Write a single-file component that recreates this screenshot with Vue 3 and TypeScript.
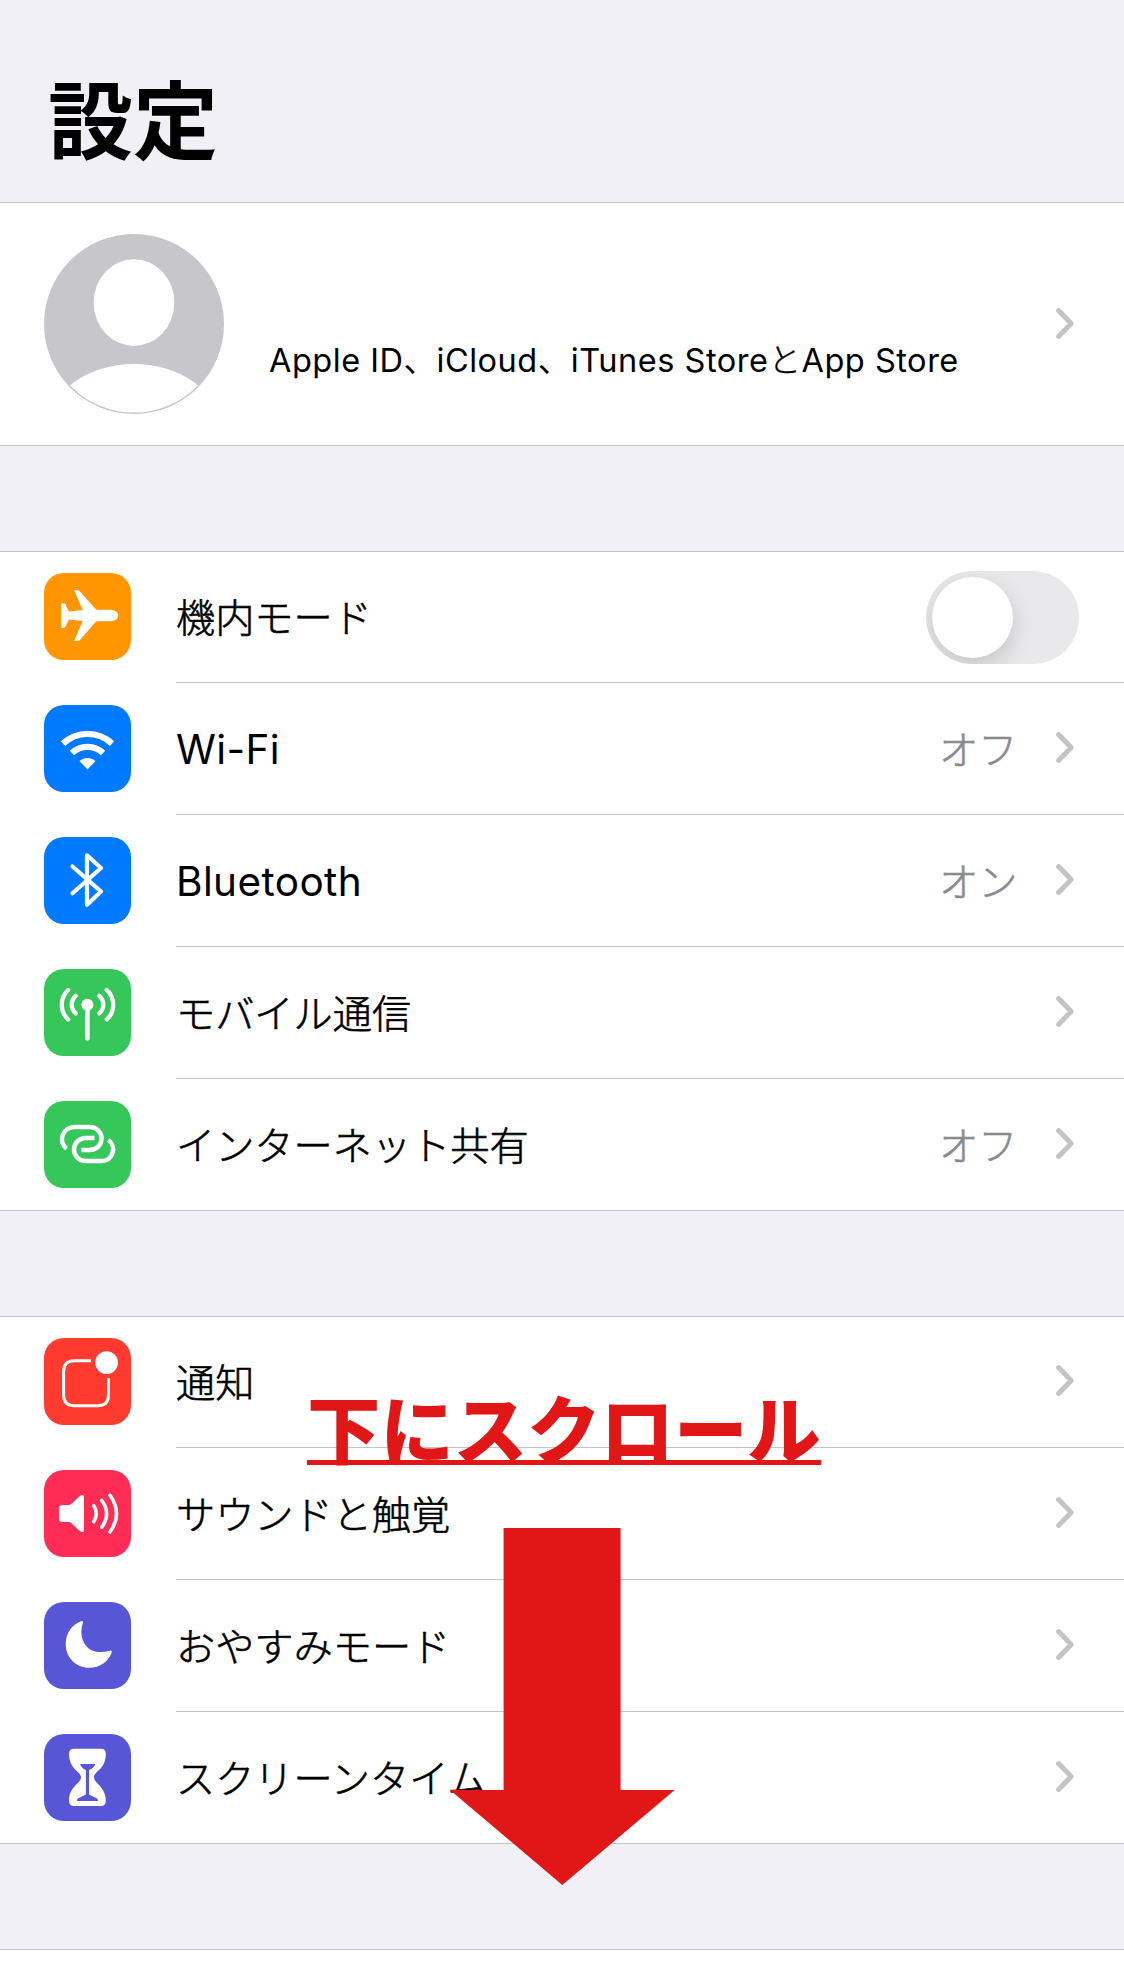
<script setup lang="ts">
type IconName = 'airplane' | 'wifi' | 'bluetooth' | 'cellular' | 'hotspot' | 'notify' | 'sound' | 'moon' | 'hourglass'

interface SettingRow {
  icon: IconName
  color: string
  label: string
  latin?: boolean
  value?: string
  toggle?: boolean
}

const groups: SettingRow[][] = [
  [
    { icon: 'airplane', color: '#ff9500', label: '機内モード', toggle: true },
    { icon: 'wifi', color: '#007aff', label: 'Wi-Fi', latin: true, value: 'オフ' },
    { icon: 'bluetooth', color: '#007aff', label: 'Bluetooth', latin: true, value: 'オン' },
    { icon: 'cellular', color: '#35c759', label: 'モバイル通信' },
    { icon: 'hotspot', color: '#35c759', label: 'インターネット共有', value: 'オフ' },
  ],
  [
    { icon: 'notify', color: '#ff3b30', label: '通知' },
    { icon: 'sound', color: '#ff2d55', label: 'サウンドと触覚' },
    { icon: 'moon', color: '#5856d6', label: 'おやすみモード' },
    { icon: 'hourglass', color: '#5856d6', label: 'スクリーンタイム' },
  ],
]
</script>

<template>
  <main class="screen">
    <header class="header"><h1>設定</h1></header>

    <section class="profile">
      <svg class="avatar" viewBox="0 0 180 180">
        <defs><clipPath id="disc"><circle cx="90" cy="90" r="88.6" /></clipPath></defs>
        <circle cx="90" cy="90" r="90" fill="#c7c6cb" />
        <ellipse cx="90" cy="68.6" rx="40.4" ry="43.3" fill="#fff" />
        <ellipse cx="90" cy="192" rx="85" ry="62" fill="#fff" clip-path="url(#disc)" />
      </svg>
      <p class="account">Apple ID、iCloud、iTunes Store<span class="kana">と</span>App Store</p>
      <svg class="chevron" viewBox="0 0 18 31"><path d="M2.6 2.6 15.2 15.5 2.6 28.4" /></svg>
    </section>

    <section v-for="(rows, g) in groups" :key="g" class="group">
      <div v-for="row in rows" :key="row.label" class="row">
        <svg class="icon" viewBox="0 0 87 87" :style="{ background: row.color }">
          <path
            v-if="row.icon === 'airplane'"
            class="solid"
            d="M30 17h3.2q1.6 0 2.6 1.2L51.2 35.6q1 1.2 2.6 1.2H67q7.3 1 7.3 5.7T67 48.3H53.8q-1.6 0-2.6 1.2L36.400 66.600Q35.300 68 33.500 68H30l8.700-20L25 46.400l-3.400 7.200Q21 55 19.500 55H17V30.300h2.500q1.500 0 2.100 1.200L25 38.400 38.700 37Z"
          />
          <g v-else-if="row.icon === 'wifi'">
            <path class="line" stroke-width="6.300" d="M19 38.600A35.600 35.600 0 0 1 68 38.600M27.900 48A22.700 22.700 0 0 1 59.100 48" />
            <path class="solid" d="M43.500 64.500 35.500 56.100A11.600 11.600 0 0 1 51.500 56.100Z" />
          </g>
          <path
            v-else-if="row.icon === 'bluetooth'"
            class="line round"
            stroke-width="4.200"
            d="M28.500 29.500 57 54.500 43 67.800V18.300L57 31 28.500 56.200"
          />
          <g v-else-if="row.icon === 'cellular'">
            <circle class="solid" cx="43.400" cy="35.700" r="6" />
            <path class="line round" stroke-width="4.600" d="M43.400 36V69.500" />
            <path
              class="line round"
              stroke-width="4.300"
              d="M31.700 26.800A11.700 11.700 0 0 0 31.700 44.400M24.200 21A20 20 0 0 0 24.200 50.400M55.300 26.800A11.700 11.700 0 0 1 55.300 44.400M62.800 21A20 20 0 0 1 62.800 50.400"
            />
          </g>
          <path
            v-else-if="row.icon === 'hotspot'"
            class="line"
            stroke-width="4.500"
            d="M22.700 47.800A12.200 12.200 0 0 1 30.500 26H46A11.500 11.500 0 0 1 46 49H37M50.500 37H41.500A11.500 11.500 0 0 0 41.500 60H57A11.600 11.600 0 0 0 64.300 39"
          />
          <g v-else-if="row.icon === 'notify'">
            <path class="line" stroke-width="3" d="M47 22.700H30.500Q19.600 22.700 19.600 33.500V57Q19.600 67.800 30.500 67.800H53.500Q64.500 67.800 64.500 57V40" />
            <circle class="solid" cx="62.600" cy="24.600" r="11.400" />
          </g>
          <g v-else-if="row.icon === 'sound'">
            <path class="solid" d="M18.500 35H24.500Q26 35 27.200 34L35.500 26.300Q37.200 25 38.500 25 40 25 40 26.500V60.500Q40 62 38.500 62 37 62 35.500 60.800L27.200 53Q26 52 24.500 52H18.500Q15 52 15 48.500V38.500Q15 35 18.500 35Z" />
            <path class="line round" stroke-width="3.600" d="M49.800 35.800Q54.800 43.500 49.800 51.600M57.800 30.500Q67.400 43.500 57.800 57.200M66 25.300Q79 43.500 66 62" />
          </g>
          <path
            v-else-if="row.icon === 'moon'"
            class="solid"
            d="M37 19.200Q39.700 18.500 39 21C37 26 37 33 38.500 37 41.500 47.500 52 52.500 64.500 49Q68.500 47.500 67.700 50.500C64.500 59.500 56 65.800 45.300 65.800 32 65.800 21.700 55.500 21.700 42 21.700 31 28 22.500 37 19.200Z"
          />
          <g v-else>
            <path class="solid" d="M30 14.700H57Q61.800 14.700 61.800 19.500C61.800 36 50 37 50 43.300S61.800 52 61.800 67Q61.800 72 57 72H30Q25 72 25 67C25 52 37 49.500 37 43.300S25 36 25 19.500Q25 14.700 30 14.700Z" />
            <path :fill="row.color" d="M36 30H51.300Q50 34 45 36V60.500L53 64.500Q54 65 54 67H33Q33 65 34 64.500L41.900 60.500V36Q37.500 34 36 30Z" />
          </g>
        </svg>
        <div class="body">
          <span class="label" :class="{ latin: row.latin }">{{ row.label }}</span>
          <span v-if="row.toggle" class="toggle"><span class="knob"></span></span>
          <template v-else>
            <span v-if="row.value" class="value">{{ row.value }}</span>
            <svg class="chevron" viewBox="0 0 18 31"><path d="M2.600 2.600 15.200 15.500 2.600 28.400" /></svg>
          </template>
        </div>
      </div>
    </section>

    <div class="next-group"></div>

    <p class="callout">下にスクロール</p>
    <svg class="arrow" viewBox="0 0 225 357"><path d="M53.600 0H170.600V262H224.700L112.300 357 0 262H53.600Z" /></svg>
  </main>
</template>

<style>
body {
  margin: 0;
  background: #f1f0f6;
}
</style>

<style scoped>
.screen {
  position: relative;
  width: 1124px;
  height: 1970px;
  overflow: hidden;
  background: #f1f0f6;
  color: #000;
  font-family: Inter, 'Noto Sans CJK JP', sans-serif;
}
.header {
  height: 202px;
  padding-left: 48px;
  box-sizing: border-box;
}
h1 {
  margin: 0;
  padding-top: 56px;
  font: 700 85px/120px 'Noto Sans CJK JP', sans-serif;
}
.profile {
  display: flex;
  align-items: center;
  height: 242px;
  padding: 0 50px 0 44px;
  border-top: 1px solid #c3c3c6;
  border-bottom: 1px solid #c3c3c6;
  background: #fff;
}
.avatar {
  flex: none;
  width: 180px;
  height: 180px;
}
.account {
  flex: 1;
  margin: 74px 0 0 45px;
  font-size: 32.5px;
  font-weight: 400;
  line-height: 40px;
  letter-spacing: 0.52px;
  white-space: nowrap;
}
.kana {
  font-weight: 300;
  -webkit-text-stroke: 0.4px currentColor;
}
.chevron {
  flex: none;
  width: 18px;
  height: 31px;
  margin-bottom: 2px;
  fill: none;
  stroke: #c4c4c6;
  stroke-width: 5;
  stroke-linecap: round;
  stroke-linejoin: round;
}
.group {
  margin-top: 105px;
  border-top: 1px solid #c3c3c6;
  border-bottom: 1px solid #c3c3c6;
  background: #fff;
}
.row {
  display: flex;
  align-items: center;
  height: 132px;
  padding-left: 44px;
}
.row:first-child {
  margin-top: -1px;
}
.row:last-child {
  height: 131px;
}
.icon {
  flex: none;
  width: 87px;
  height: 87px;
  margin-top: -1px;
  border-radius: 20px;
}
.row:last-child .icon {
  margin-top: 0;
}
.solid {
  fill: #fff;
}
.line {
  fill: none;
  stroke: #fff;
}
.round {
  stroke-linecap: round;
  stroke-linejoin: round;
}
.body {
  flex: 1;
  display: flex;
  align-items: center;
  height: 131px;
  margin-left: 45px;
  padding-right: 50px;
  border-bottom: 1px solid #c3c3c6;
}
.row:last-child .body {
  border-bottom: 0;
}
.label {
  flex: 1;
  margin-bottom: 3px;
  font: 300 39.2px/60px 'Noto Sans CJK JP', sans-serif;
  -webkit-text-stroke: 0.6px currentColor;
  white-space: nowrap;
}
.label.latin {
  margin: 3px 0 0;
  font: 400 40.5px/60px Inter, sans-serif;
  letter-spacing: 0.4px;
  -webkit-text-stroke: 0;
}
.value {
  margin: 0 38.600px 3px 0;
  color: #8a8a8e;
  font: 300 39.2px/60px 'Noto Sans CJK JP', sans-serif;
  -webkit-text-stroke: 0.6px currentColor;
}
.toggle {
  flex: none;
  width: 153px;
  height: 93px;
  margin: 2px -5px 0 0;
  padding: 6px;
  box-sizing: border-box;
  border-radius: 47px;
  background: #e9e9eb;
  overflow: hidden;
}
.knob {
  display: block;
  width: 81px;
  height: 81px;
  border-radius: 50%;
  background: #fff;
  box-shadow: 0 8px 22px rgba(0, 0, 0, 0.16);
}
.next-group {
  height: 30px;
  margin-top: 105px;
  border-top: 1px solid #c3c3c6;
  background: #fff;
}
.callout {
  position: absolute;
  left: 307px;
  top: 1376px;
  margin: 0;
  color: #e11717;
  font: 900 73.400px/100px 'Noto Sans CJK JP', sans-serif;
  white-space: nowrap;
}
.callout::after {
  content: '';
  position: absolute;
  left: 0;
  right: 0;
  top: 84px;
  height: 5px;
  background: #e11717;
}
.arrow {
  position: absolute;
  left: 450px;
  top: 1528px;
  width: 225px;
  height: 357px;
  fill: #e11717;
}
</style>
